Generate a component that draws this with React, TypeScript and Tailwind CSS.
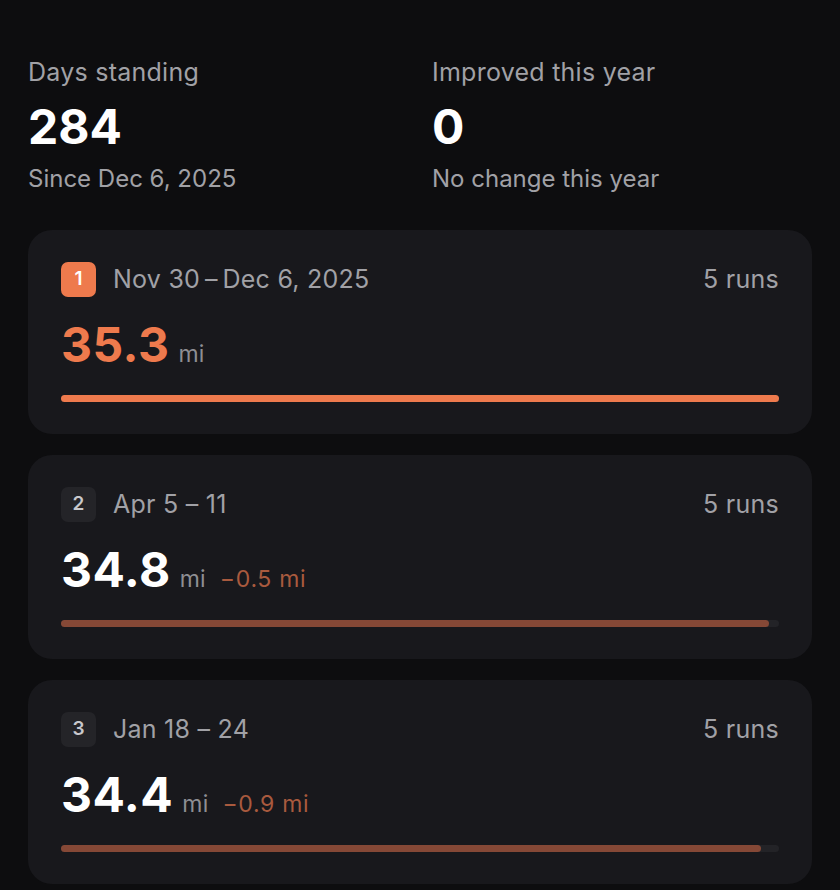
import React from 'react';

interface Week {
  rank: number;
  range: string;
  runs: number;
  miles: number;
  delta?: string;
}

const weeks: Week[] = [
  { rank: 1, range: 'Nov 30\u2009–\u2009Dec 6, 2025', runs: 5, miles: 35.3 },
  { rank: 2, range: 'Apr 5 – 11', runs: 5, miles: 34.8, delta: '−0.5 mi' },
  { rank: 3, range: 'Jan 18 – 24', runs: 5, miles: 34.4, delta: '−0.9 mi' },
];

const best = 35.3;

function Stat({ label, value, sub }: { label: string; value: string; sub: string }) {
  return (
    <div className="flex flex-col">
      <div className="text-[25px] leading-[28px] tracking-[0.01em] text-[#a1a1a6]">{label}</div>
      <div className="mt-[15px] text-[48px] leading-[52px] font-bold text-white">{value}</div>
      <div className="mt-[12px] text-[24px] leading-[28px] text-[#a1a1a6]">{sub}</div>
    </div>
  );
}

function WeekCard({ week }: { week: Week }) {
  const top = week.rank === 1;
  const pct = (week.miles / best) * 100;
  return (
    <div className="rounded-[24px] bg-[#18181c] px-[33px] pt-[32px] pb-[32px]">
      <div className="flex h-[35px] items-center justify-between">
        <div className="flex items-center gap-[17px]">
          <div
            className={`flex h-[35px] w-[35px] items-center justify-center rounded-[7px] text-[19px] font-semibold ${
              top ? 'bg-[#ee7a4d] text-white' : 'bg-[#242428] text-[#c8c8cc]'
            }`}
          >
            {week.rank}
          </div>
          <div className="text-[25px] tracking-[0.01em] text-[#a1a1a6]">{week.range}</div>
        </div>
        <div className="text-[25px] tracking-[0.01em] text-[#a1a1a6]">{week.runs} runs</div>
      </div>
      <div className="mt-[22px] flex h-[52px] items-baseline">
        <span
          className={`text-[48px] leading-[52px] font-bold tracking-[0.01em] ${top ? 'text-[#ee7a4d]' : 'text-white'}`}
        >
          {week.miles.toFixed(1)}
        </span>
        <span className="ml-[9px] text-[23px] tracking-[0.01em] text-[#8e8e93]">mi</span>
        {week.delta && (
          <span className="ml-[14px] text-[23px] tracking-[0.03em] text-[#a95a3e]">{week.delta}</span>
        )}
      </div>
      <div className="mt-[24px] h-[7px] w-full rounded-full bg-[#232327]">
        <div
          className={`h-full rounded-full ${top ? 'bg-[#ee7a4d]' : 'bg-[#854836]'}`}
          style={{ width: `${pct}%` }}
        />
      </div>
    </div>
  );
}

export default function App() {
  return (
    <div
      className="min-h-screen bg-[#0d0d0f] px-[28px] pt-[58px] pb-[6px]"
      style={{ fontFamily: 'Inter, "Noto Sans", sans-serif' }}
    >
      <div className="grid grid-cols-2 gap-6">
        <Stat label="Days standing" value="284" sub="Since Dec 6, 2025" />
        <Stat label="Improved this year" value="0" sub="No change this year" />
      </div>
      <div className="mt-[37px] flex flex-col gap-[21px]">
        {weeks.map((w) => (
          <WeekCard key={w.rank} week={w} />
        ))}
      </div>
    </div>
  );
}
